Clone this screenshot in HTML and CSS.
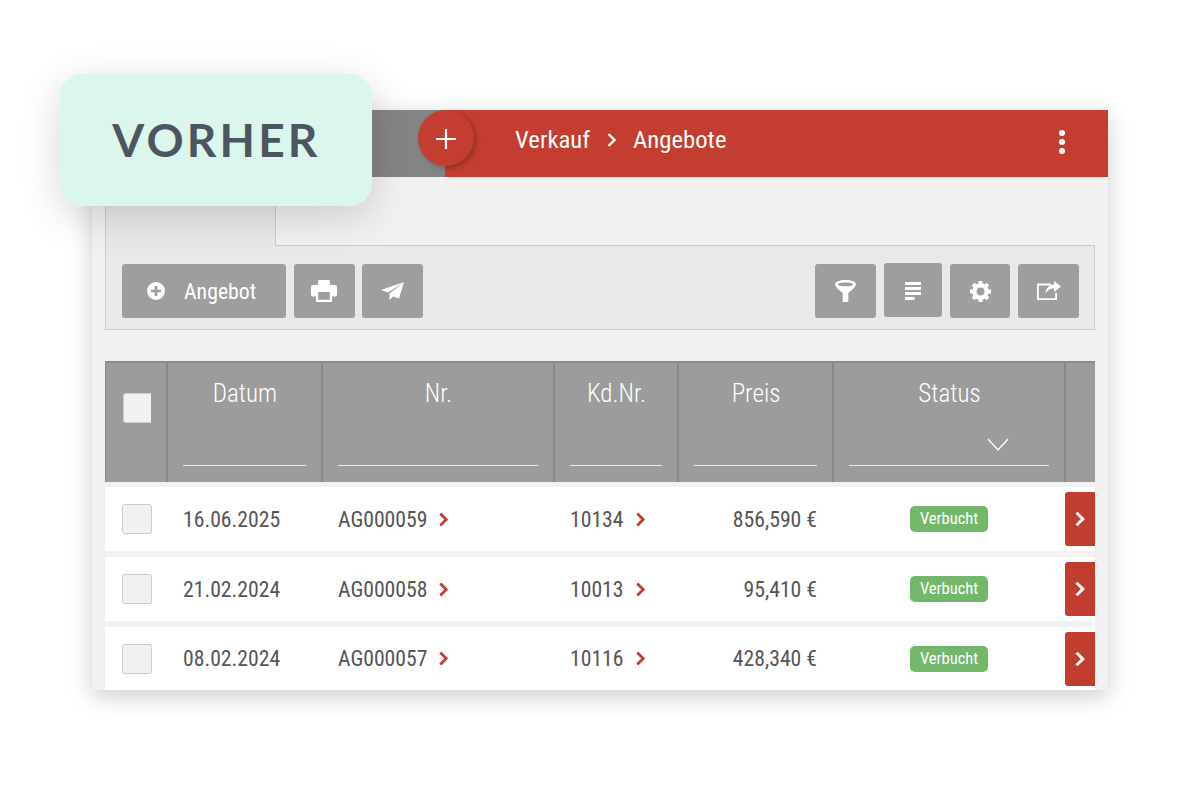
FILE: index.html
```html
<!DOCTYPE html>
<html lang="de">
<head>
<meta charset="utf-8">
<title>Vorher</title>
<link rel="stylesheet" href="styles.css">
</head>
<body>
<main class="stage">
  <div class="badge">VORHER</div>
  <section class="window">
    <header class="topbar">
      <div class="topbar-left"></div>
      <div class="topbar-right">
        <nav class="crumbs">
          <span>Verkauf</span>
          <svg class="crumb-sep" viewBox="0 0 12 16"><path d="M2.500 2l6 6-6 6" fill="none" stroke="#fff" stroke-width="2.400"/></svg>
          <span>Angebote</span>
        </nav>
        <div class="dots"><i></i><i></i><i></i></div>
      </div>
      <button class="fab"><svg viewBox="0 0 20 20"><path d="M10 0v20M0 10h20" stroke="#fff" stroke-width="2.200" fill="none"/></svg></button>
    </header>
    <div class="content">
      <div class="tabrow"><div class="tab"></div></div>
      <div class="panel">
        <div class="btn-group">
          <button class="btn btn-wide">
            <svg class="ico-plus" viewBox="0 0 20 20"><circle cx="10" cy="10" r="10" fill="#fff"/><path d="M10 4.500v11M4.500 10h11" stroke="#9e9e9e" stroke-width="3"/></svg>
            <span>Angebot</span>
          </button>
          <button class="btn btn-icon">
            <svg class="ico-print" viewBox="0 0 26 22"><path d="M6.500 5.500L7.500 0h11l1 5.500z" fill="#fff"/><rect x="0" y="5" width="26" height="11.500" rx="2" fill="#fff"/><rect x="5" y="11" width="16" height="11" fill="#fff"/><rect x="7.200" y="12" width="11.600" height="7.800" fill="#9e9e9e"/></svg>
          </button>
          <button class="btn btn-icon btn-tight">
            <svg class="ico-send" viewBox="0 0 23 18"><path d="M23 0L0 8l7 2.500zM23 0L8.500 11.500V18l3.500-3.500 6 2z" fill="#fff"/></svg>
          </button>
        </div>
        <div class="btn-group">
          <button class="btn btn-icon">
            <svg class="ico-filter" viewBox="0 0 21 22"><path d="M10.500 0C4.700 0 0 1.800 0 4.200c0 2.300 3.500 5.300 7.700 8.600V22h5.600v-9.200C17.500 9.500 21 6.500 21 4.200 21 1.800 16.300 0 10.500 0zm0 2.600c4 0 7.500.8 7.500 1.800S14.500 6.200 10.500 6.200 3 5.400 3 4.400s3.500-1.800 7.500-1.800z" fill="#fff" fill-rule="evenodd"/></svg>
          </button>
          <button class="btn btn-raised">
            <svg class="ico-list" viewBox="0 0 16 18"><path d="M0 0h16v3H0zM0 5h16v3H0zM0 10h16v3H0zM0 15h9.500v3H0z" fill="#fff"/></svg>
          </button>
          <button class="btn btn-gear">
            <svg class="ico-gear" viewBox="0 0 24 24"><g stroke="#fff" stroke-width="4.600"><path d="M12 0v5M12 19v5M0 12h5M19 12h5M3.500 3.500l3.500 3.500M17 17l3.500 3.500M20.500 3.500L17 7M7 17l-3.500 3.500"/></g><circle cx="12" cy="12" r="7" fill="none" stroke="#fff" stroke-width="5"/></svg>
          </button>
          <button class="btn btn-icon">
            <svg class="ico-share" viewBox="0 0 24 19"><path d="M14 3.500H.9v14.600h18.200V12" fill="none" stroke="#fff" stroke-width="1.800"/><path d="M17 0l7 5.500-7 5.500V7.500c-4 0-6.500 1.500-8.500 5 .5-5.500 3.500-8.500 8.500-9z" fill="#fff"/></svg>
          </button>
        </div>
      </div>
      <div class="table">
        <div class="grid thead">
          <div class="th th-check"><span class="check check-head"></span></div>
          <div class="th"><span class="th-label">Datum</span><span class="filter"></span></div>
          <div class="th"><span class="th-label">Nr.</span><span class="filter"></span></div>
          <div class="th"><span class="th-label">Kd.Nr.</span><span class="filter"></span></div>
          <div class="th"><span class="th-label">Preis</span><span class="filter"></span></div>
          <div class="th"><span class="th-label">Status</span>
            <svg class="caret" viewBox="0 0 22 14"><path d="M1 1l10 11L21 1" fill="none" stroke="#fff" stroke-width="1.300"/></svg>
            <span class="filter filter-select"></span></div>
          <div class="th th-last"></div>
        </div>
        <div class="grid row">
          <div class="cell cell-check"><span class="check"></span></div>
          <div class="cell">16.06.2025</div>
          <div class="cell">AG000059<svg class="chev" viewBox="0 0 10 14"><path d="M2 1.500l5.500 5.500-5.500 5.500" fill="none" stroke="#c13d30" stroke-width="2.600"/></svg></div>
          <div class="cell">10134<svg class="chev" viewBox="0 0 10 14"><path d="M2 1.500l5.500 5.500-5.500 5.500" fill="none" stroke="#c13d30" stroke-width="2.600"/></svg></div>
          <div class="cell cell-price">856,590 €</div>
          <div class="cell cell-status"><span class="status">Verbucht</span></div>
          <div class="cell-action"><button class="go"><svg viewBox="0 0 10 14"><path d="M2 1.500l5.500 5.500-5.500 5.500" fill="none" stroke="#fff" stroke-width="2.600"/></svg></button></div>
        </div>
        <div class="grid row">
          <div class="cell cell-check"><span class="check"></span></div>
          <div class="cell">21.02.2024</div>
          <div class="cell">AG000058<svg class="chev" viewBox="0 0 10 14"><path d="M2 1.500l5.500 5.500-5.500 5.500" fill="none" stroke="#c13d30" stroke-width="2.600"/></svg></div>
          <div class="cell">10013<svg class="chev" viewBox="0 0 10 14"><path d="M2 1.500l5.500 5.500-5.500 5.500" fill="none" stroke="#c13d30" stroke-width="2.600"/></svg></div>
          <div class="cell cell-price">95,410 €</div>
          <div class="cell cell-status"><span class="status">Verbucht</span></div>
          <div class="cell-action"><button class="go"><svg viewBox="0 0 10 14"><path d="M2 1.500l5.500 5.500-5.500 5.500" fill="none" stroke="#fff" stroke-width="2.600"/></svg></button></div>
        </div>
        <div class="grid row row-last">
          <div class="cell cell-check"><span class="check"></span></div>
          <div class="cell">08.02.2024</div>
          <div class="cell">AG000057<svg class="chev" viewBox="0 0 10 14"><path d="M2 1.500l5.500 5.500-5.500 5.500" fill="none" stroke="#c13d30" stroke-width="2.600"/></svg></div>
          <div class="cell">10116<svg class="chev" viewBox="0 0 10 14"><path d="M2 1.500l5.500 5.500-5.500 5.500" fill="none" stroke="#c13d30" stroke-width="2.600"/></svg></div>
          <div class="cell cell-price">428,340 €</div>
          <div class="cell cell-status"><span class="status">Verbucht</span></div>
          <div class="cell-action"><button class="go"><svg viewBox="0 0 10 14"><path d="M2 1.500l5.500 5.500-5.500 5.500" fill="none" stroke="#fff" stroke-width="2.600"/></svg></button></div>
        </div>
      </div>
    </div>
  </section>
</main>
</body>
</html>
```
FILE: styles.css
```css
* { box-sizing: border-box; }
html, body { margin: 0; padding: 0; background: #fff; }
body { width: 1200px; height: 800px; overflow: hidden; font-family: "Roboto Condensed", Roboto, "Liberation Sans", sans-serif; font-stretch: condensed; }
button { border: 0; padding: 0; margin: 0; font: inherit; color: inherit; }
svg { display: block; }
.stage { position: relative; width: 1200px; height: 800px; padding: 110px 92px; }

.badge { position: absolute; z-index: 5; left: 60px; top: 74px; width: 312px; height: 132px; display: flex; align-items: center; justify-content: center; padding: 0 0 2px 1px; background: #daf6ed; border-radius: 22px; box-shadow: 0 10px 40px rgba(0,0,0,.16); color: #4d5560; font-family: Lato, sans-serif; font-stretch: normal; font-weight: 700; font-size: 46px; letter-spacing: 3.200px; }

.window { width: 1016px; height: 580px; background: #f1f1f1; box-shadow: 0 6px 22px rgba(0,0,0,.2); overflow: hidden; }

.topbar { position: relative; display: flex; height: 67px; }
.topbar-left { width: 353px; background: #848484; }
.topbar-right { flex: 1; display: flex; align-items: center; justify-content: space-between; padding: 0 43px 3px 70px; background: #c33d31; color: #fff; }
.crumbs { display: flex; align-items: center; gap: 15.500px; font-size: 24.700px; font-weight: 400; padding-bottom: 5px; }
.crumb-sep { width: 12px; height: 16px; }
.dots { display: flex; flex-direction: column; gap: 3px; }
.dots i { display: block; width: 6px; height: 6px; border-radius: 50%; background: #fff; }
.fab { position: absolute; left: 326px; top: 0; width: 56px; height: 56px; display: flex; align-items: center; justify-content: center; padding-top: 2px; border-radius: 50%; background: #c33d31; box-shadow: 2px 2px 5px rgba(0,0,0,.25); }
.fab svg { width: 20px; height: 20px; }

.content { padding: 0 13px; }
.tabrow { height: 68px; display: flex; align-items: flex-end; }
.tab { width: 171px; height: 46px; background: #e9e9e9; border: 1px solid #ccc; border-bottom: 0; position: relative; top: 1px; z-index: 1; }
.panel { height: 85px; display: flex; justify-content: space-between; align-items: flex-start; padding: 18px 15px 0 16px; background: #e9e9e9; border: 1px solid #ccc; }
.btn-group { display: flex; gap: 8px; }
.btn { height: 54px; display: flex; align-items: center; justify-content: center; background: #9e9e9e; border-radius: 3px; color: #fff; }
.btn-wide { width: 164px; justify-content: flex-start; padding-left: 25px; font-size: 21.800px; font-weight: 400; }
.btn-wide span { margin-left: 19px; }
.btn-icon { width: 61px; }
.btn-tight { margin-left: -1px; }
.btn-raised { width: 58px; position: relative; top: -1px; }
.btn-gear { width: 60px; }
.ico-plus { width: 18px; height: 18px; }
.ico-print { width: 26px; height: 22px; margin-right: 1px; }
.ico-send { width: 23px; height: 18px; }
.ico-filter { width: 21px; height: 22px; }
.ico-list { width: 16px; height: 18px; margin-top: 2px; }
.ico-gear { width: 21px; height: 21px; }
.ico-share { width: 24px; height: 19px; margin-top: -1px; }

.table { margin-top: 31px; }
.grid { display: grid; grid-template-columns: 62px 155px 232px 124px 155px 232px 30px; }
.thead { height: 121px; background: #9c9c9c; border-top: 2px solid #888; }
.th { position: relative; display: flex; flex-direction: column; align-items: center; margin-left: -1px; padding: 17px 16px 0; border-left: 2px solid #888; color: #fff; font-size: 25px; font-weight: 300; }
.th-label { line-height: 28px; }
.th-check { margin-left: 0; border-left: 1px solid #888; padding: 30px 0 0 17px; align-items: flex-start; }
.filter { position: absolute; left: 15px; right: 16px; top: 102px; height: 1px; background: #e8e8e8; }
.caret { position: absolute; right: 56px; top: 75px; width: 22px; height: 14px; }
.check { display: block; width: 30px; height: 30px; background: #f1f1f1; border: 1px solid #ccc; border-radius: 3px; }
.check-head { border-right: 0; border-radius: 3px 0 0 3px; width: 28px; }

.row { height: 64px; margin-top: 6px; background: #fff; align-items: center; color: #555; font-size: 21.700px; font-weight: 400; }
.thead + .row { margin-top: 5px; }
.row-last { height: 63px; }
.cell { display: flex; align-items: center; padding-left: 16px; }
.cell-check { padding-left: 17px; }
.cell-price { justify-content: flex-end; padding: 0 16px 0 0; }
.cell-status { justify-content: center; padding: 0; }
.chev { width: 11px; height: 15px; margin-left: 11px; }
.status { display: block; width: 78px; height: 26px; line-height: 26px; text-align: center; background: #72b76a; border-radius: 5px; color: #fff; font-size: 16.500px; font-weight: 400; }
.cell-action { display: flex; }
.go { width: 30px; height: 54px; display: flex; align-items: center; justify-content: center; background: #c13d30; border-radius: 3px 0 0 3px; }
.go svg { width: 12px; height: 16px; }
```
